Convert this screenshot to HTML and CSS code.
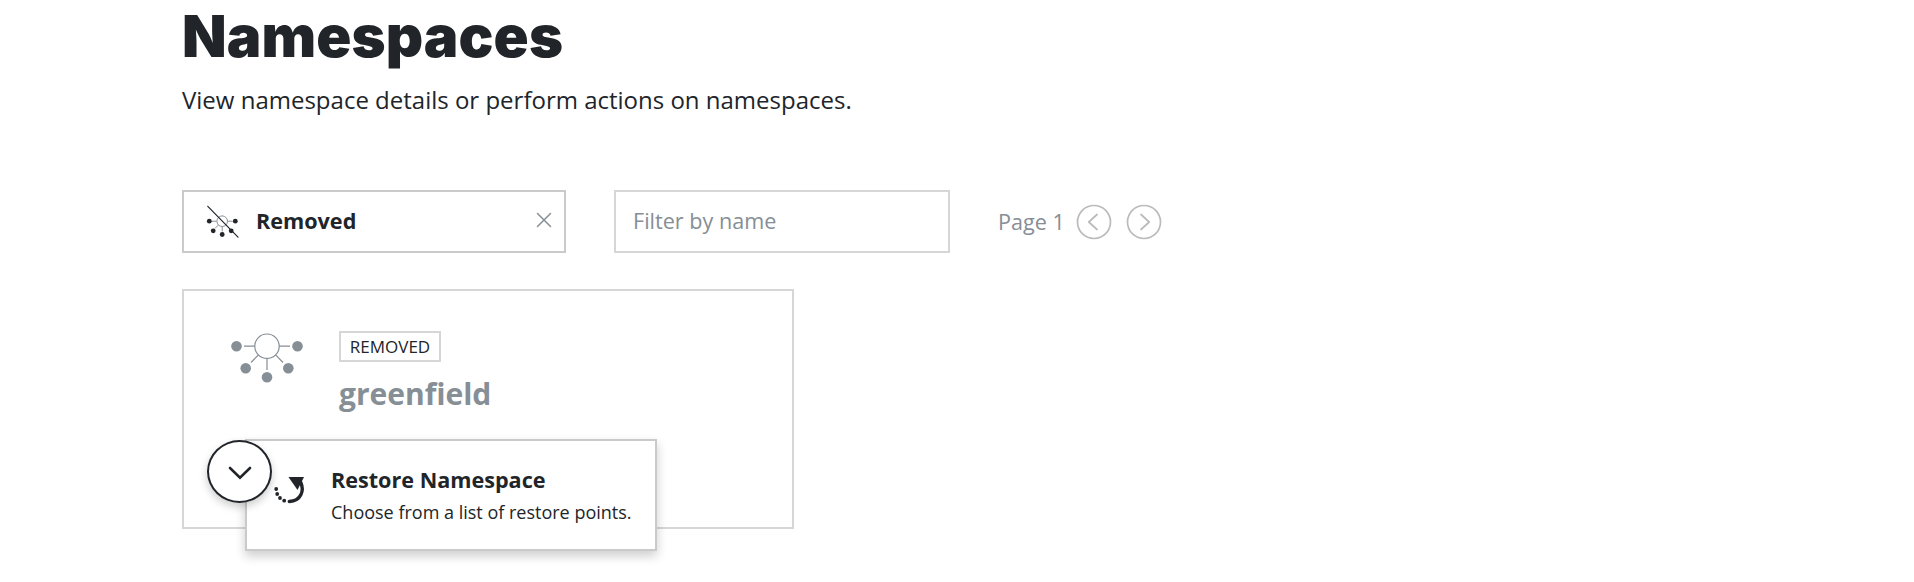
FILE: index.html
```html
<!DOCTYPE html>
<html lang="en">
<head>
<meta charset="utf-8">
<title>Namespaces</title>
<link rel="stylesheet" href="styles.css">
</head>
<body>
<main class="page">
  <h1 class="title">Namespaces</h1>
  <p class="subtitle">View namespace details or perform actions on namespaces.</p>

  <div class="toolbar">
    <div class="status-filter">
      <svg class="status-icon" width="34" height="34" viewBox="0 0 34 34">
        <g fill="none" stroke="#8a9299" stroke-width="1">
          <circle cx="16.2" cy="16.200" r="5.3"/>
          <path d="M5.5 16.200h5M21.500 16.200h5M16.200 21.500v5M12.400 20l-3.500 3.500M20 20l3.500 3.500"/>
        </g>
        <g fill="#212529">
          <circle cx="3.300" cy="16.200" r="2.400"/><circle cx="29.300" cy="16.200" r="2.400"/>
          <circle cx="7.200" cy="25.800" r="2.400"/><circle cx="25.200" cy="25.800" r="2.400"/>
          <circle cx="16.200" cy="29.500" r="2.400"/>
        </g>
        <path d="M1.800 1.300L32 32.200" stroke="#212529" stroke-width="1.200" stroke-linecap="round"/>
      </svg>
      <span class="status-label">Removed</span>
      <svg class="clear" width="16" height="16" viewBox="0 0 16 16"><path d="M1.500 1.500l13 13M14.500 1.500l-13 13" stroke="#868e96" stroke-width="1.500" stroke-linecap="round"/></svg>
    </div>
    <input class="name-filter" type="text" placeholder="Filter by name">
    <div class="pager">
      <span class="pager-label">Page 1</span>
      <svg class="pager-button" width="36" height="36" viewBox="0 0 36 36" fill="none" stroke="#bbb" stroke-width="1.700" stroke-linecap="round" stroke-linejoin="round"><circle cx="18" cy="18" r="16.500"/><path d="M21 10.500L12.800 18L21 25.500"/></svg>
      <svg class="pager-button" width="36" height="36" viewBox="0 0 36 36" fill="none" stroke="#bbb" stroke-width="1.700" stroke-linecap="round" stroke-linejoin="round"><circle cx="18" cy="18" r="16.500"/><path d="M15 10.500L23.200 18L15 25.500"/></svg>
    </div>
  </div>

  <section class="card">
    <svg class="card-icon" width="74" height="52" viewBox="0 0 74 52">
      <g fill="none" stroke="#868e96" stroke-width="1.200">
        <circle cx="37" cy="14.200" r="12.200"/>
        <path d="M14 14.200h10.800M49.200 14.200h10.800M37 26.400V38M28.400 22.800l-7.400 7.700M45.600 22.800l7.400 7.700"/>
      </g>
      <g fill="#868e96">
        <circle cx="6.500" cy="14.200" r="5.300"/><circle cx="67.500" cy="14.200" r="5.300"/>
        <circle cx="15.700" cy="36.300" r="5.300"/><circle cx="58.300" cy="36.300" r="5.300"/>
        <circle cx="37" cy="45.200" r="5.300"/>
      </g>
    </svg>
    <div class="card-body">
      <span class="badge">REMOVED</span>
      <h2 class="name">greenfield</h2>
    </div>

    <div class="menu">
      <svg class="menu-icon" width="32" height="30" viewBox="0 0 32 30">
        <path d="M14.500 1h15.500l-6.500 13z" fill="#212529"/>
        <path d="M26.800 6.500c3.500 8 .500 18.500-11.500 19" fill="none" stroke="#212529" stroke-width="3.400" stroke-linecap="round"/>
        <g fill="#212529"><circle cx="2.200" cy="13" r="1.900"/><circle cx="3.200" cy="18" r="1.900"/><circle cx="6" cy="22" r="1.900"/><circle cx="10.200" cy="24.700" r="1.900"/></g>
      </svg>
      <div>
        <div class="menu-title">Restore Namespace</div>
        <div class="menu-text">Choose from a list of restore points.</div>
      </div>
    </div>
    <button class="toggle" aria-label="Actions">
      <svg width="24" height="14" viewBox="0 0 24 14"><path d="M2 2l10 9.600L22 2" fill="none" stroke="#212529" stroke-width="2.600" stroke-linecap="round"/></svg>
    </button>
  </section>
</main>
</body>
</html>
```
FILE: styles.css
```css
* { box-sizing: border-box; }
body {
  margin: 0;
  background: #fff;
  color: #212529;
  font-family: "Open Sans", "Noto Sans", sans-serif;
}
.page { min-height: 582px; padding: 0 182px; }
.title {
  margin: 0;
  height: 80px;
  font-family: Inter, sans-serif;
  font-size: 58px;
  line-height: 72px;
  font-weight: 900;
  letter-spacing: 0.1px;
}
.subtitle {
  margin: 0;
  height: 110px;
  font-size: 24px;
  line-height: 40px;
  white-space: nowrap;
}
.toolbar { display: flex; align-items: flex-start; }
.status-filter {
  display: flex;
  align-items: center;
  width: 384px;
  height: 63px;
  padding: 0 12px 0 22px;
  border: 2px solid #cacaca;
}
.status-label { margin-left: 16px; margin-top: -1px; font-size: 21.6px; line-height: 30px; font-weight: 700; }
.clear { margin-left: auto; margin-top: -3px; }
.name-filter {
  width: 336px;
  height: 63px;
  margin-left: 48px;
  padding: 0 17px 2px;
  border: 2px solid #d6d6d6;
  font: 21.6px/30px "Open Sans", "Noto Sans", sans-serif;
}
.name-filter::placeholder { color: #868e96; opacity: 1; }
.pager { display: flex; align-items: center; height: 63px; margin-left: 48px; }
.pager-label { width: 78px; margin-top: 1px; font-size: 21.6px; line-height: 30px; color: #868e96; white-space: nowrap; }
.pager-button + .pager-button { margin-left: 14px; }
.card {
  position: relative;
  display: flex;
  width: 612px;
  height: 240px;
  margin-top: 36px;
  padding: 40px 46px;
  border: 2px solid #d6d6d6;
}
.card-icon { margin-right: 35px; margin-top: 1px; }
.badge {
  display: block;
  width: 102px;
  height: 31px;
  border: 2px solid #d6d6d6;
  text-align: center;
  font-size: 17px;
  line-height: 28px;
}
.name { margin: 11px 0 0; font-size: 30px; line-height: 42px; color: #868e96; }
.menu {
  position: absolute;
  left: 61px;
  top: 148px;
  display: flex;
  width: 412px;
  height: 112px;
  padding: 24px 0 0 27px;
  border: 2px solid #cacaca;
  background: #fff;
  box-shadow: 0 5px 10px rgba(0, 0, 0, .2);
  white-space: nowrap;
}
.menu-icon { margin: 11px 25px 0 0; }
.menu-title { font-size: 21.6px; line-height: 30px; font-weight: 700; }
.menu-text { margin-top: 1px; font-size: 18px; line-height: 32px; }
.toggle {
  position: absolute;
  left: 23px;
  top: 149px;
  display: flex;
  align-items: center;
  justify-content: center;
  width: 65px;
  height: 63px;
  padding: 2px 0 0;
  border: 2px solid #212529;
  border-radius: 50%;
  background: #fff;
  box-shadow: 0 4px 8px rgba(0, 0, 0, .2);
}
```
